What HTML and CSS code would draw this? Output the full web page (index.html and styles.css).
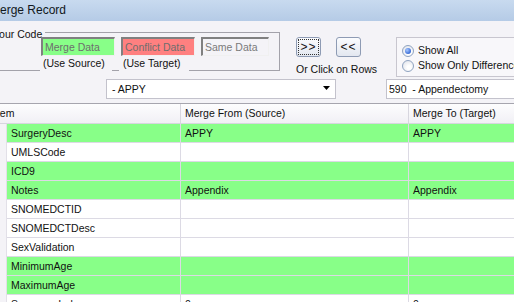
FILE: index.html
```html
<!DOCTYPE html>
<html>
<head>
<meta charset="utf-8">
<link rel="stylesheet" href="styles.css">
</head>
<body>
<div class="window">
  <div class="titlebar"><span class="title">Merge Record</span></div>
  <div class="panel">
    <div class="toprow">
      <div class="group">
        <div class="group-head"><span class="legend">Your Code</span><span class="group-line"></span></div>
        <div class="group-body">
          <div class="swatches">
            <span class="swatch merge">Merge Data</span>
            <span class="swatch conflict">Conflict Data</span>
            <span class="swatch same">Same Data</span>
          </div>
          <div class="hints">
            <span class="hint hint-source">(Use Source)</span>
            <span class="hint hint-target">(Use Target)</span>
          </div>
        </div>
      </div>
      <div class="actions">
        <div class="btns">
          <button class="btn"><span class="focus">&gt;&gt;</span></button>
          <button class="btn"><span class="nofocus">&lt;&lt;</span></button>
        </div>
        <div class="or">Or Click on Rows</div>
      </div>
      <div class="radios">
        <div class="radio"><span class="dot checked"></span>Show All</div>
        <div class="radio"><span class="dot"></span>Show Only Differences</div>
      </div>
    </div>
    <div class="comborow">
      <div class="combo combo-src"><span class="combo-text">- APPY</span><svg class="arrow" width="7" height="4" viewBox="0 0 7 4"><path d="M0 0H7L3.5 4Z" fill="#000"/></svg></div>
      <div class="combo combo-tgt"><span class="combo-text">590  - Appendectomy</span></div>
    </div>
  </div>
  <div class="grid">
    <div class="row head">
      <div class="hcell hcell-item">Item</div>
      <div class="hcell">Merge From (Source)</div>
      <div class="hcell">Merge To (Target)</div>
    </div>
    <div class="row diff"><div class="rh"></div><div class="cell">SurgeryDesc</div><div class="cell">APPY</div><div class="cell">APPY</div></div>
    <div class="row"><div class="rh"></div><div class="cell">UMLSCode</div><div class="cell"></div><div class="cell"></div></div>
    <div class="row diff"><div class="rh"></div><div class="cell">ICD9</div><div class="cell"></div><div class="cell"></div></div>
    <div class="row diff"><div class="rh"></div><div class="cell">Notes</div><div class="cell">Appendix</div><div class="cell">Appendix</div></div>
    <div class="row"><div class="rh"></div><div class="cell">SNOMEDCTID</div><div class="cell"></div><div class="cell"></div></div>
    <div class="row"><div class="rh"></div><div class="cell">SNOMEDCTDesc</div><div class="cell"></div><div class="cell"></div></div>
    <div class="row"><div class="rh"></div><div class="cell">SexValidation</div><div class="cell"></div><div class="cell"></div></div>
    <div class="row diff"><div class="rh"></div><div class="cell">MinimumAge</div><div class="cell"></div><div class="cell"></div></div>
    <div class="row diff"><div class="rh"></div><div class="cell">MaximumAge</div><div class="cell"></div><div class="cell"></div></div>
    <div class="row"><div class="rh"></div><div class="cell">SequenceInd</div><div class="cell">0</div><div class="cell">0</div></div>
  </div>
</div>
</body>
</html>
```

FILE: styles.css
```css
html, body {
  margin: 0;
  padding: 0;
}
body {
  width: 514px;
  height: 302px;
  overflow: hidden;
  background: #f4f3f7;
  font-family: "Liberation Sans", Arial, sans-serif;
  font-size: 10.5px;
  color: #111;
}
.window {
  width: 514px;
  height: 302px;
  overflow: hidden;
}
.titlebar {
  height: 21px;
  line-height: 21px;
  background: linear-gradient(#c8daef, #b5cbe6);
  font-size: 12px;
  color: #111820;
  overflow: hidden;
  white-space: nowrap;
}
.title {
  display: block;
  text-indent: -10px;
}
.panel {
  height: 82px;
}
.toprow {
  height: 58px;
  padding-top: 6px;
  box-sizing: border-box;
  display: flex;
  align-items: flex-start;
}
.group {
  flex: none;
  width: 287px;
  margin-left: -7px;
}
.group-head {
  display: flex;
  height: 10px;
}
.legend {
  line-height: 15px;
  padding-right: 3px;
  white-space: nowrap;
}
.group-line {
  flex: 1;
  margin-top: 5px;
  height: 4px;
  border-top: 1px solid #a3a2aa;
  border-right: 1px solid #a3a2aa;
}
.group-body {
  border-right: 1px solid #a3a2aa;
  border-bottom: 1px solid #a3a2aa;
  padding-left: 48px;
}
.swatches {
  display: flex;
  gap: 6px;
  height: 19px;
}
.swatch {
  flex: none;
  box-sizing: border-box;
  height: 19px;
  line-height: 16px;
  padding-left: 2px;
  color: #6e6e6e;
  border-top: 2px solid #808080;
  border-left: 2px solid #808080;
  border-right: 1px solid #f0f0f0;
  border-bottom: 1px solid #f0f0f0;
  white-space: nowrap;
  overflow: hidden;
}
.merge {
  width: 74px;
  background: #88ff88;
}
.conflict {
  width: 74px;
  background: #ff8080;
}
.same {
  width: 68px;
  background: #f4f3f7;
  color: #7a7a7a;
}
.hints {
  display: flex;
  height: 15px;
  margin-bottom: -1px;
}
.hint {
  flex: none;
  box-sizing: border-box;
  height: 15px;
  line-height: 15px;
  background: #f4f3f7;
  white-space: nowrap;
}
.hint-source {
  margin-left: -1px;
  width: 72px;
  padding-left: 3px;
}
.hint-target {
  margin-left: 7px;
  width: 70px;
  padding-left: 4px;
}
.actions {
  flex: none;
  width: 80px;
  margin-left: 16px;
  margin-top: 10px;
}
.btns {
  display: flex;
  gap: 15px;
}
.btn {
  flex: none;
  box-sizing: border-box;
  width: 25px;
  height: 20px;
  padding: 2px;
  margin: 0;
  border: 1px solid #8e9bb4;
  border-radius: 3px;
  background: linear-gradient(#fbfcfe, #e3e7f0);
  font-family: "Liberation Sans", Arial, sans-serif;
  font-size: 12px;
  color: #111;
  display: flex;
}
.focus, .nofocus {
  flex: 1;
  display: flex;
  align-items: center;
  justify-content: center;
  letter-spacing: 1px;
}
.focus {
  outline: 1px dotted #333;
}
.or {
  margin-top: 5px;
  line-height: 15px;
  white-space: nowrap;
}
.radios {
  flex: none;
  box-sizing: border-box;
  width: 200px;
  height: 40px;
  margin-left: 20px;
  margin-top: 10px;
  padding: 5px 0 0 5px;
  border: 1px solid #c8c6cf;
  background: #f8f7fa;
}
.radio {
  display: flex;
  align-items: center;
  gap: 4px;
  height: 15px;
  line-height: 15px;
  white-space: nowrap;
}
.dot {
  flex: none;
  box-sizing: border-box;
  width: 12px;
  height: 12px;
  border-radius: 50%;
  border: 1px solid #8fa3c0;
  background: radial-gradient(circle at 60% 65%, #ffffff 20%, #dfe2ea 90%);
  display: flex;
  align-items: center;
  justify-content: center;
}
.dot.checked::after {
  content: "";
  width: 6px;
  height: 6px;
  border-radius: 50%;
  background: radial-gradient(circle at 35% 35%, #a8c8ff, #2b5fd0 80%);
}
.comborow {
  display: flex;
  height: 20px;
}
.combo {
  flex: none;
  box-sizing: border-box;
  height: 20px;
  border: 1px solid #c3c2cc;
  background: #fff;
  display: flex;
  align-items: center;
  white-space: pre;
  overflow: hidden;
}
.combo-text {
  line-height: 18px;
}
.combo-src {
  width: 230px;
  margin-left: 106px;
  padding: 0 5px 0 5px;
  justify-content: space-between;
}
.combo-tgt {
  width: 200px;
  margin-left: 50px;
  padding-left: 2px;
  border-right: none;
}
.arrow {
  display: block;
  margin-top: -2px;
}
.grid {
  margin-left: -10px;
  width: 524px;
  border-top: 1px solid #a6a5ae;
}
.row {
  display: grid;
  grid-template-columns: 17px 174px 228px 200px;
  height: 19px;
}
.row.head {
  height: 20px;
  grid-template-columns: 191px 228px 200px;
}
.hcell {
  box-sizing: border-box;
  height: 20px;
  line-height: 19px;
  padding-left: 4px;
  background: linear-gradient(#fdfdfe, #f1f0f5);
  border-right: 1px solid #d7d6df;
  border-bottom: 1px solid #d7d6df;
  white-space: nowrap;
  overflow: hidden;
}
.rh {
  box-sizing: border-box;
  background: #f4f3f7;
  border-right: 1px solid #e2e0e8;
}
.cell {
  box-sizing: border-box;
  height: 19px;
  line-height: 18px;
  padding-left: 4px;
  background: #fff;
  border-right: 1px solid #dcdae4;
  border-bottom: 1px solid #dcdae4;
  white-space: nowrap;
  overflow: hidden;
}
.row.diff .cell {
  background: #88ff88;
}
```
